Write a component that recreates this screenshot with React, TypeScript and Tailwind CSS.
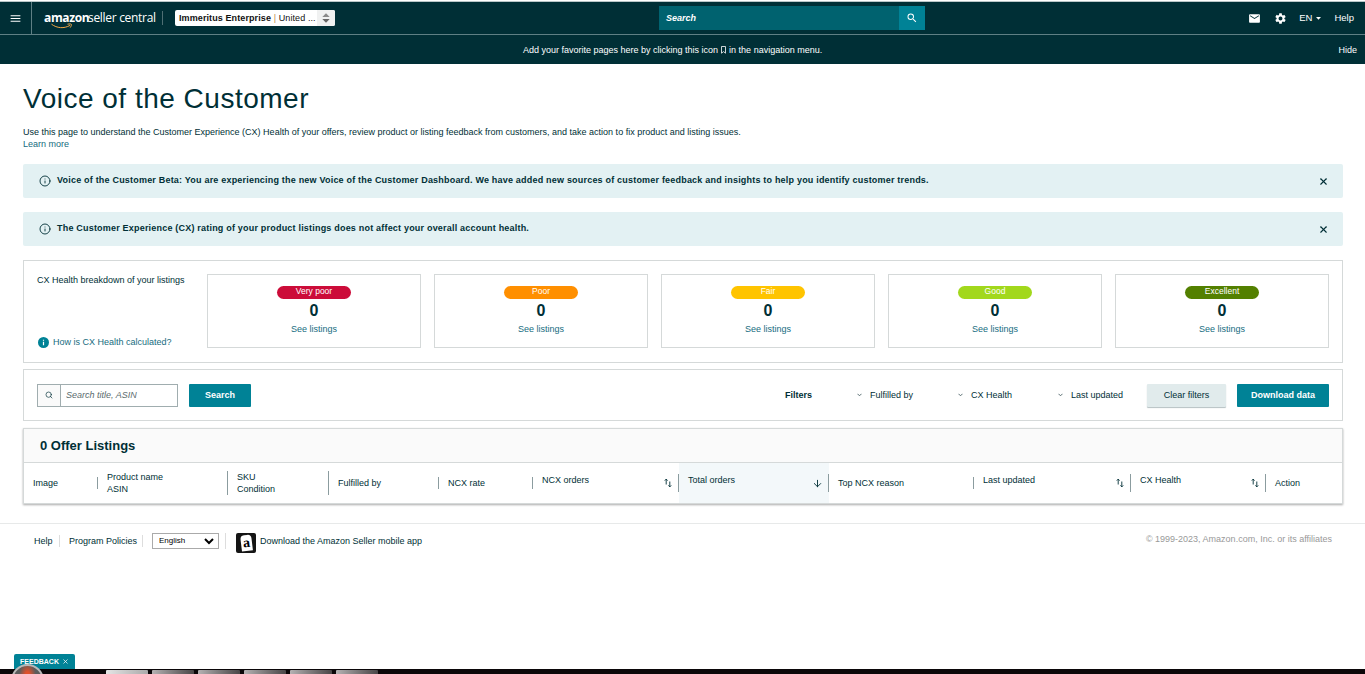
import { useState } from 'react';
import { Info, Search, X, ArrowDown } from 'lucide-react';
import { MdEmail, MdSettings, MdSearch, MdMenu } from 'react-icons/md';

const ratings = [
  { label: 'Very poor', count: 0, color: 'bg-[#cc0c39]' },
  { label: 'Poor', count: 0, color: 'bg-[#ff8f00]' },
  { label: 'Fair', count: 0, color: 'bg-[#ffc400]' },
  { label: 'Good', count: 0, color: 'bg-[#a2d81c]' },
  { label: 'Excellent', count: 0, color: 'bg-[#538000]' },
];

const columns = [
  { lines: ['Image'], width: 'w-[74px]', divider: 'h-3' },
  { lines: ['Product name', 'ASIN'], width: 'w-[130px]', divider: 'h-6' },
  { lines: ['SKU', 'Condition'], width: 'w-[101px]', divider: 'h-6' },
  { lines: ['Fulfilled by'], width: 'w-[110px]', divider: 'h-3' },
  { lines: ['NCX rate'], width: 'w-[94px]', divider: 'h-3' },
  { lines: ['NCX orders'], width: 'w-[146px]', divider: 'h-[18px]', sort: 'both' },
  { lines: ['Total orders'], width: 'w-[150px]', divider: 'h-[18px]', sort: 'down' },
  { lines: ['Top NCX reason'], width: 'w-[145px]', divider: 'h-3' },
  { lines: ['Last updated'], width: 'w-[157px]', divider: 'h-[18px]', sort: 'both' },
  { lines: ['CX Health'], width: 'w-[135px]', divider: 'h-[18px]', sort: 'both' },
  { lines: ['Action'], width: 'w-[76px]', divider: '' },
];

const taskbarItems = [1, 2, 3, 4, 5, 6];

const SortIcon = () => (
  <svg width="8" height="10" viewBox="0 0 8 10" fill="none" stroke="#002f36" strokeWidth="0.9">
    <path d="M2.2 6.5V1.2M0.8 2.6L2.2 1.1L3.6 2.6" />
    <path d="M5.8 3.5V8.8M4.4 7.4L5.8 8.9L7.2 7.4" />
  </svg>
);

const Chevron = () => (
  <svg width="5" height="4" viewBox="0 0 5 4" fill="none" stroke="#4a6165" strokeWidth="0.9">
    <path d="M0.5 0.8L2.5 2.8L4.5 0.8" />
  </svg>
);

const Logo = () => (
  <div className="relative flex h-[18px] items-center whitespace-nowrap font-['Open_Sans','Noto_Sans',sans-serif] text-[12px] leading-[16px] text-white">
    <span className="w-[41px] font-bold tracking-[-0.35px]">amazon</span>
    <span className="ml-[3px] tracking-[-0.3px]">seller central</span>
    <svg className="absolute left-[7px] top-[14px]" width="22" height="7" viewBox="0 0 22 7" fill="none" stroke="#f3a847" strokeWidth="1">
      <path d="M0.5 1.2C6 5.3 13 5.8 19 2.4" />
      <path d="M16.5 1.2C18.5 0.8 20.3 0.8 20.4 1.4C20.5 2.2 20 3.5 19.2 4.6" />
    </svg>
  </div>
);

const TopBar = () => (
  <header className="bg-[#002f36] text-white">
    <div className="h-[2px] border-b border-[#b9c6c8] bg-white" />
    <div className="flex h-[33px] items-center border-b border-[#5f8085]">
      <button className="flex h-full w-8 items-center justify-center border-r border-[#5f8085]">
        <MdMenu size={13} />
      </button>
      <div className="ml-3 w-[118px]"><Logo /></div>
      <div className="h-[14px] w-px bg-[#4f6f74]" />
      <div className="ml-3 flex h-4 w-[160px] items-center overflow-hidden rounded-[2px] bg-white text-[9px] text-[#111]">
        <span className="w-[142px] whitespace-nowrap pl-1 tracking-[0.1px]">
          <b>Immeritus Enterprise</b> <span className="text-[#c08a4a]">|</span> United ...
        </span>
        <span className="flex h-full flex-1 items-center justify-center bg-[#f0f1f1]">
          <svg width="8" height="10" viewBox="0 0 8 10" fill="#666">
            <path d="M0.3 4L4 0.2L7.7 4Z" fill="#8a8a8a" />
            <path d="M0.3 6L4 9.8L7.7 6Z" />
          </svg>
        </span>
      </div>
      <div className="ml-[324px] flex h-6 w-[266px] items-center">
        <div className="flex h-full flex-1 items-center bg-[#00626f] pl-[7px] text-[9px] font-bold italic">Search</div>
        <button className="flex h-full w-[26px] items-center justify-center bg-[#008296]"><MdSearch size={12} /></button>
      </div>
      <div className="ml-auto flex items-center pr-[11px] text-[9.5px]">
        <MdEmail size={13} />
        <MdSettings size={13} className="ml-[13px]" />
        <span className="ml-3">EN</span>
        <svg className="ml-1" width="5" height="3" viewBox="0 0 5 3" fill="white"><path d="M0 0H5L2.5 2.8Z" /></svg>
        <span className="ml-[13px]">Help</span>
      </div>
    </div>
    <div className="flex h-[29px] items-center text-[9px]">
      <div className="ml-[523px] flex items-center whitespace-nowrap">
        <span>Add your favorite pages here by clicking this icon</span>
        <svg className="mx-[3px]" width="5" height="8" viewBox="0 0 5 8" fill="none" stroke="white" strokeWidth="0.8">
          <path d="M0.5 0.5H4.5V7.2L2.5 5.6L0.5 7.2Z" />
        </svg>
        <span>in the navigation menu.</span>
      </div>
      <span className="ml-auto pr-2">Hide</span>
    </div>
  </header>
);

const Banner = ({ text, onClose }: { text: string; onClose: () => void }) => (
  <div className="mb-[14px] flex h-[34px] items-center rounded-[2px] bg-[#e3f1f3] pl-4 pr-[14px]">
    <Info size={12} strokeWidth={1.8} />
    <span className="ml-[6px] whitespace-nowrap pb-[2px] text-[9px] font-bold tracking-[0.2px]">{text}</span>
    <button className="ml-auto" onClick={onClose}><X size={11} strokeWidth={2.4} /></button>
  </div>
);

const App = () => {
  const [query, setQuery] = useState('');
  const [banners, setBanners] = useState([
    'Voice of the Customer Beta: You are experiencing the new Voice of the Customer Dashboard. We have added new sources of customer feedback and insights to help you identify customer trends.',
    'The Customer Experience (CX) rating of your product listings does not affect your overall account health.',
  ]);

  return (
    <div className="relative flex h-[674px] w-[1365px] flex-col overflow-hidden bg-white font-['Liberation_Sans',Arial,sans-serif] text-[9px] leading-3 text-[#002f36]">
      <TopBar />

      <main className="px-[23px] pr-[22px]">
        <h1 className="mt-[17px] h-9 whitespace-nowrap text-[28px] leading-9 tracking-[0.5px]">Voice of the Customer</h1>
        <p className="mt-[9px] whitespace-nowrap">
          Use this page to understand the Customer Experience (CX) Health of your offers, review product or listing feedback from customers, and take action to fix product and listing issues.
        </p>
        <p className="mb-[14px] text-[#166c80]">Learn more</p>

        {banners.map(text => (
          <Banner key={text} text={text} onClose={() => setBanners(banners.filter(b => b !== text))} />
        ))}

        {/* CX health summary */}
        <section className="flex h-[103px] border border-[#d5d9d9] px-[13px] pt-[13px]">
          <div className="flex h-[74px] w-[170px] flex-col justify-between">
            <span className="whitespace-nowrap font-medium">CX Health breakdown of your listings</span>
            <span className="flex items-center whitespace-nowrap text-[#166c80]">
              <svg className="mr-1 ml-[1px]" width="11" height="11" viewBox="0 0 11 11">
                <circle cx="5.5" cy="5.5" r="5.5" fill="#008296" />
                <path d="M5.5 4.8V8.2M5.5 2.7V3.8" stroke="white" strokeWidth="1.2" />
              </svg>
              How is CX Health calculated?
            </span>
          </div>
          <div className="flex flex-1 gap-[13px]">
            {ratings.map(rating => (
              <div key={rating.label} className="flex h-[74px] flex-1 flex-col items-center border border-[#d5d9d9] pt-[11px]">
                <span className={`h-[13px] w-[74px] rounded-full text-center text-[8.5px] leading-[11px] text-white ${rating.color}`}>
                  {rating.label}
                </span>
                <span className="mt-[3px] text-[16px] font-bold leading-[18px]">{rating.count}</span>
                <a className="mt-[3px] text-[#166c80]">See listings</a>
              </div>
            ))}
          </div>
        </section>

        {/* Search and filters */}
        <section className="mt-[6px] flex h-[52px] items-center border border-[#d5d9d9] px-[13px]">
          <div className="flex h-[23px] w-[141px] border border-[#a0adaf]">
            <span className="flex w-[23px] items-center justify-center border-r border-[#a0adaf] bg-[#fafafa]"><Search size={8} /></span>
            <input
              type="text"
              placeholder="Search title, ASIN"
              value={query}
              onChange={(e) => setQuery(e.target.value)}
              className="min-w-0 flex-1 pl-[5px] text-[9px] italic outline-none placeholder:text-[#5a6b6e]"
            />
          </div>
          <button className="ml-[11px] h-[23px] w-[62px] rounded-[1px] bg-[#008296] font-bold text-white">Search</button>
          <b className="ml-[534px] w-[72px]">Filters</b>
          <span className="flex w-[101px] items-center gap-2"><Chevron />Fulfilled by</span>
          <span className="flex w-[100px] items-center gap-2"><Chevron />CX Health</span>
          <span className="flex items-center gap-2"><Chevron />Last updated</span>
          <button className="ml-auto h-[23px] w-[79px] rounded-[1px] bg-[#e1ebec] shadow-[0_1px_1px_#b5c0c2]">Clear filters</button>
          <button className="ml-[11px] h-[23px] w-[92px] rounded-[1px] bg-[#008296] font-bold text-white">Download data</button>
        </section>

        {/* Listings table */}
        <section className="mt-[7px] h-[76px] border border-[#d5d9d9] shadow-[0_1px_2px_#aaa]">
          <h2 className="h-[34px] border-b border-[#d5d9d9] bg-[#fafafa] pl-4 text-[13px] font-bold leading-[34px]">0 Offer Listings</h2>
          <div className="flex h-[40px]">
            {columns.map(col => (
              <div
                key={col.lines[0]}
                className={`flex h-full items-center justify-between pl-[9px] font-medium ${col.width} ${col.sort === 'down' ? 'bg-[#f3f8fa]' : ''}`}
              >
                <div className={`whitespace-nowrap ${col.sort ? 'pb-[6px]' : ''}`}>
                  {col.lines.map(line => <div key={line}>{line}</div>)}
                </div>
                <div className="flex items-center">
                  {col.sort === 'both' && <span className="mr-[6px]"><SortIcon /></span>}
                  {col.sort === 'down' && <ArrowDown size={11} className="mr-[5px]" />}
                  {col.divider && <span className={`w-px bg-[#8b9c9f] ${col.divider}`} />}
                </div>
              </div>
            ))}
          </div>
        </section>
      </main>

      <footer className="mt-[19px] flex h-[35px] items-center border-t border-[#e7e9e9] pl-[34px] pr-[33px]">
        <span className="w-[25px]">Help</span>
        <span className="h-3 w-px bg-[#ddd]" />
        <span className="ml-[9px] w-[73px] whitespace-nowrap">Program Policies</span>
        <span className="h-3 w-px bg-[#ddd]" />
        <span className="ml-[9px] flex h-4 w-[67px] items-center justify-between border border-[#aaa] pl-[6px] pr-1 text-[8px] text-black">
          English
          <svg width="10" height="7" viewBox="0 0 10 7" fill="none" stroke="black" strokeWidth="2">
            <path d="M1 1L5 5L9 1" />
          </svg>
        </span>
        <span className="ml-[6px] h-4 w-px bg-[#ddd]" />
        <span className="ml-[10px] mt-[3px] flex size-5 items-center justify-center rounded-[2px] bg-[#151515]">
          <span className="relative flex h-4 w-[11px] rotate-[-7deg] items-center justify-center rounded-t-[4px] bg-white font-['Liberation_Serif',serif] text-[14px] font-bold leading-4 text-black">a</span>
        </span>
        <span className="ml-1 whitespace-nowrap">Download the Amazon Seller mobile app</span>
        <span className="ml-auto pb-1 text-[#999]">© 1999-2023, Amazon.com, Inc. or its affiliates</span>
      </footer>

      {/* Desktop taskbar edge with the feedback tab over it */}
      <div className="mt-auto flex h-[5px] gap-1 bg-[#0b0709] pl-[106px] pt-px">
        {taskbarItems.map(item => (
          <span key={item} className={`h-1 w-[42px] rounded-t-[1px] bg-linear-to-r ${item === 1 ? 'from-[#e5e5e5] to-[#aaa]' : 'from-[#b5b2b3] to-[#4a4748]'}`} />
        ))}
      </div>
      <div className="absolute left-[14px] top-[654px] flex h-[15px] w-[61px] items-center justify-center gap-[3px] rounded-t-[2px] bg-[#008296] text-[7px] font-bold text-white">
        FEEDBACK <X size={7} strokeWidth={2.5} />
      </div>
      <div className="absolute left-[11px] top-[664px] size-[33px] rounded-full border-[2px] border-[#b9b9b9] bg-radial-[at_50%_30%] from-[#e0502a] from-10% to-[#5c5c5c] to-40%" />
    </div>
  );
};

export default App;
